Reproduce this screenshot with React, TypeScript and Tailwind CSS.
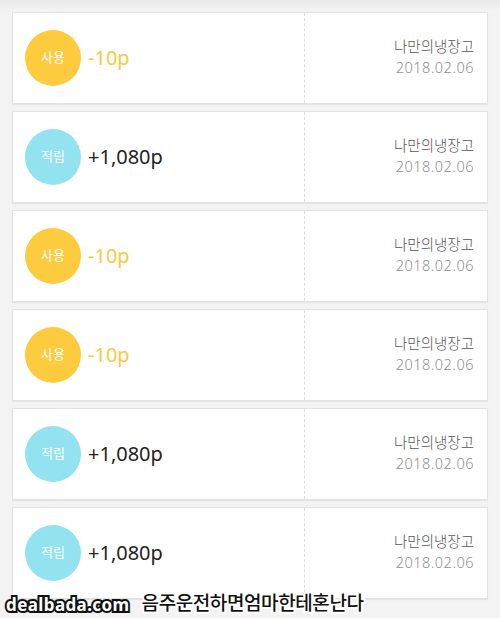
const rows = [
  { type: 'use', amount: '-10p' },
  { type: 'save', amount: '+1,080p' },
  { type: 'use', amount: '-10p' },
  { type: 'use', amount: '-10p' },
  { type: 'save', amount: '+1,080p' },
  { type: 'save', amount: '+1,080p' },
];

export default function App() {
  return (
    <div
      className="relative w-[500px] h-[618px] overflow-hidden bg-[#f3f3f3]"
      style={{ fontFamily: '"Noto Sans", "Noto Sans CJK KR", sans-serif' }}
    >
      <div className="absolute inset-x-0 top-0 h-[10px] bg-gradient-to-b from-[#e9e9e9] to-[#f3f3f3]" />

      <div className="relative flex flex-col gap-[7px] pt-[12px] px-[12px]">
        {rows.map((row, i) => {
          const isUse = row.type === 'use';
          return (
            <div
              key={i}
              className="flex h-[92px] bg-white border border-[#e2e2e2] shadow-[0_1px_1px_rgba(0,0,0,0.06)]"
            >
              {/* left side */}
              <div className="flex items-center w-[292px] pl-[12px] border-r border-dashed border-[#dcdcdc]">
                <div
                  className={
                    isUse
                      ? 'flex items-center justify-center w-[56px] h-[56px] rounded-full bg-[#fdcb3e] text-white text-[13px]'
                      : 'flex items-center justify-center w-[56px] h-[56px] rounded-full bg-[#92e3ef] text-white text-[13px]'
                  }
                >
                  {isUse ? '사용' : '적립'}
                </div>
                <span
                  className={
                    isUse
                      ? 'ml-[7px] text-[20px] text-[#f9c93f]'
                      : 'ml-[7px] text-[20px] text-[#222222]'
                  }
                >
                  {row.amount}
                </span>
              </div>

              {/* right side */}
              <div className="flex-1 flex flex-col items-end justify-center pr-[13px] pb-[2px]">
                <span className="text-[14.5px] leading-[21px] font-light text-[#555555]">나만의냉장고</span>
                <span className="text-[14.5px] leading-[21px] font-light tracking-[0.5px] text-[#8f8f8f]">2018.02.06</span>
              </div>
            </div>
          );
        })}
      </div>

      {/* watermark */}
      <div className="absolute left-[6px] bottom-[1px] flex items-end gap-[12px]">
        <span className="text-[17px] font-bold tracking-[0.4px] text-white [-webkit-text-stroke:4px_#111] [paint-order:stroke_fill]">
          dealbada.com
        </span>
        <span className="text-[19px] font-medium tracking-[-0.4px] text-[#111] [-webkit-text-stroke:4px_#fff] [paint-order:stroke_fill]">
          음주운전하면엄마한테혼난다
        </span>
      </div>
    </div>
  );
}
